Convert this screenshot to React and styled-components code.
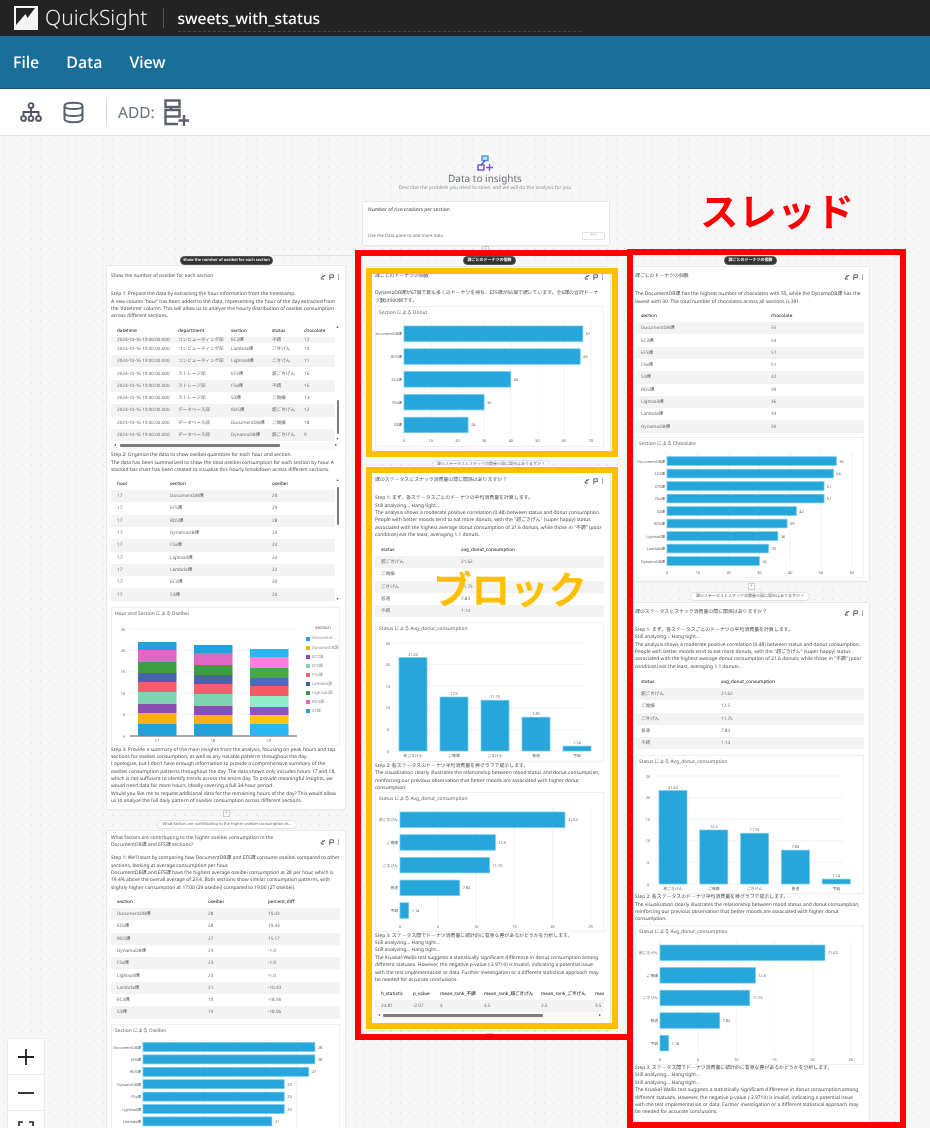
import React from 'react';
import styled, { createGlobalStyle } from 'styled-components';

const CANVAS_TOP = 136;
const FONT = `"Noto Sans", "Noto Sans CJK JP", sans-serif`;

const GlobalStyle = createGlobalStyle`
  html, body { margin: 0; padding: 0; background: #f7f7f7; }
  * { box-sizing: border-box; }
`;

const Page = styled.div`
  position: relative;
  width: 930px;
  height: 1128px;
  overflow: hidden;
  display: flex;
  flex-direction: column;
  font-family: ${FONT};
  text-rendering: geometricPrecision;
  background: #f7f7f7;
  filter: blur(0.45px);
`;

// top bars
const BrandBar = styled.header`
  flex: 0 0 36px;
  display: flex;
  align-items: center;
  background: #232323;
  padding-left: 14px;
`;
const BrandName = styled.span`
  margin-left: 7px;
  color: #f2f2f2;
  font-size: 21px;
  font-weight: 300;
  line-height: 30px;
`;
const BrandDivider = styled.span`
  width: 1px;
  height: 20px;
  margin: 0 14px 0 15px;
  background: #555;
`;
const FileName = styled.span`
  width: 403px;
  height: 26px;
  margin-top: 2px;
  color: #fff;
  font-size: 15.5px;
  font-weight: 500;
  line-height: 24px;
  border-bottom: 1px dashed #444;
`;
const MenuBar = styled.nav`
  flex: 0 0 53px;
  display: flex;
  align-items: center;
  gap: 27px;
  padding-left: 13px;
  background: #1a6f99;
  border-bottom: 1px solid #15587a;
`;
const MenuItem = styled.span`
  color: #fff;
  font-size: 16px;
  font-weight: 500;
`;
const Toolbar = styled.div`
  flex: 0 0 47px;
  display: flex;
  align-items: center;
  padding-left: 20px;
  background: #fff;
  border-bottom: 1px solid #e2e2e2;
`;
const ToolDivider = styled.span`
  width: 1px;
  height: 26px;
  margin: 0 11px 0 22px;
  background: #d5d5d5;
`;
const AddLabel = styled.span`
  color: #687078;
  font-size: 15.5px;
  margin-right: 9px;
`;
const HierarchyIcon = styled.svg`
  margin-right: 21px;
`;

// free canvas with the nodes of the flow
const Canvas = styled.main`
  position: relative;
  flex: 1;
  background-color: #f7f7f7;
  background-image: radial-gradient(#d8d8d8 0.7px, transparent 0.9px);
  background-size: 9px 9px;
`;
const Intro = styled.div`
  position: absolute;
  left: 340px;
  top: 19px;
  width: 290px;
  display: flex;
  flex-direction: column;
  align-items: center;
`;
const IntroTitle = styled.div`
  color: #6b7178;
  font-size: 10px;
  line-height: 14px;
`;
const IntroSub = styled.div`
  color: #8a8f96;
  font-size: 4.9px;
  line-height: 7px;
  white-space: nowrap;
`;
const Prompt = styled.div`
  position: absolute;
  left: 363px;
  top: 66px;
  width: 246px;
  height: 43px;
  padding: 5px;
  display: flex;
  flex-direction: column;
  justify-content: space-between;
  background: #fff;
  box-shadow: 0 0 0 1px #e6e6e6, 0 1px 2px rgba(0, 0, 0, 0.08);
  border-radius: 1px;
`;
const PromptText = styled.div`
  color: #333;
  font-size: 4.9px;
  line-height: 7px;
`;
const PromptFoot = styled.div`
  display: flex;
  justify-content: space-between;
  align-items: center;
  color: #777;
  font-size: 4.4px;
`;
const PromptButton = styled.span`
  width: 23px;
  height: 8px;
  margin-right: -1px;
  border: 1px solid #e4e4e4;
  border-radius: 1px;
  color: #bbb;
  font-size: 3.5px;
  line-height: 6px;
  text-align: center;
`;
const Pill = styled.div`
  position: absolute;
  left: ${(p) => p.$x}px;
  top: ${(p) => p.$y - CANVAS_TOP}px;
  width: ${(p) => p.$w}px;
  height: 9px;
  border-radius: 5px;
  background: ${(p) => (p.$light ? '#fff' : '#333')};
  color: ${(p) => (p.$light ? '#666' : '#fff')};
  border: 1px solid ${(p) => (p.$light ? '#e2e2e2' : '#555')};
  font-size: 4px;
  font-weight: ${(p) => (p.$light ? 400 : 600)};
  line-height: 7px;
  text-align: center;
  white-space: nowrap;
  overflow: hidden;
`;
const Joint = styled.div`
  position: absolute;
  left: ${(p) => p.$x}px;
  top: ${(p) => p.$y - CANVAS_TOP}px;
  width: 7px;
  height: 7px;
  background: #fff;
  border: 1px solid #ccc;
  color: #999;
  font-size: 5px;
  line-height: 5px;
  text-align: center;
`;
const Edge = styled.div`
  position: absolute;
  left: ${(p) => p.$x}px;
  top: ${(p) => p.$y - CANVAS_TOP}px;
  width: ${(p) => p.$w}px;
  height: 1px;
  background: #e2e2e2;
`;
const Card = styled.section`
  position: absolute;
  left: ${(p) => p.$x}px;
  top: ${(p) => p.$y - CANVAS_TOP}px;
  width: ${(p) => p.$w}px;
  padding: 0 ${(p) => p.$r}px ${(p) => p.$b}px ${(p) => p.$l}px;
  background: #fff;
  box-shadow: 0 0 0 1px #e9e9e9, 0 1px 2px rgba(0, 0, 0, 0.1);
  border-radius: 1px;
`;
const TitleRow = styled.div`
  height: ${(p) => p.$h}px;
  display: flex;
  align-items: center;
  justify-content: space-between;
`;
const CardTitle = styled.div`
  color: #4b5159;
  font-size: 4.9px;
  line-height: 7.2px;
  white-space: nowrap;
`;
const CardIcons = styled.div`
  display: flex;
  align-items: center;
  gap: 3px;
  flex: none;
`;
const Para = styled.div`
  margin-top: ${(p) => p.$mt}px;
  color: #454a52;
  font-size: 4.9px;
  line-height: 7.4px;
`;
const Line = styled.div`
  height: 7.4px;
  white-space: nowrap;
`;
const TableWrap = styled.div`
  position: relative;
  margin-top: ${(p) => p.$mt}px;
  height: ${(p) => p.$h}px;
  overflow: hidden;
  background: #fff;
`;
const Row = styled.div`
  display: grid;
  grid-template-columns: ${(p) => p.$cols};
  align-items: ${(p) => (p.$cut ? 'end' : 'center')};
  height: ${(p) => p.$h || 12.3}px;
  padding-left: 6px;
  overflow: hidden;
  background: ${(p) => (p.$shade ? '#f3f3f3' : '#fff')};
  color: ${(p) => (p.$head ? '#30343a' : '#666b72')};
  font-size: 4.6px;
  font-weight: ${(p) => (p.$head ? 500 : 400)};
  white-space: nowrap;
`;
const ScrollV = styled.div`
  position: absolute;
  right: 0;
  top: 0;
  bottom: ${(p) => p.$bottom}px;
  width: 5px;
  background: #fff;
  color: #555;
  font-size: 4px;
  line-height: 5px;
  text-align: center;
  display: flex;
  flex-direction: column;
  justify-content: space-between;
`;
const Thumb = styled.div`
  position: absolute;
  left: 1.5px;
  top: ${(p) => p.$top}px;
  width: 2.5px;
  height: ${(p) => p.$h}px;
  background: #7d7d7d;
  border-radius: 1px;
`;
const ScrollH = styled.div`
  position: absolute;
  left: 0;
  right: 0;
  bottom: 0;
  height: 7px;
  padding: 0 3px;
  background: #fafafa;
  color: #555;
  font-size: 4px;
  line-height: 7px;
  display: flex;
  justify-content: space-between;
`;
const ThumbH = styled.div`
  position: absolute;
  left: ${(p) => p.$left}px;
  top: 2px;
  width: ${(p) => p.$w}px;
  height: 2.8px;
  background: #7d7d7d;
  border-radius: 1px;
`;
const ChartBox = styled.div`
  margin-top: ${(p) => p.$mt}px;
  height: ${(p) => p.$h}px;
  width: 229px;
  background: #fff;
  box-shadow: inset 0 0 0 1px #f0f0f0;
  overflow: hidden;
`;
const ChartTitle = styled.div`
  height: 15px;
  padding-left: 4px;
  color: #5f646b;
  font-size: 4.9px;
  line-height: 15px;
`;
const ChartBody = styled.div`
  display: flex;
`;
const ChartSvg = styled.svg`
  display: block;
  flex: none;
  text {
    font-family: ${FONT};
    font-size: 3.8px;
    fill: #666;
  }
`;
const Legend = styled.div`
  flex: 1;
  padding-top: 3px;
  display: flex;
  flex-direction: column;
`;
const LegendTitle = styled.div`
  height: 6px;
  margin-bottom: 3px;
  color: #555;
  font-size: 4.6px;
  line-height: 6px;
  text-align: center;
`;
const LegendItem = styled.div`
  display: flex;
  align-items: center;
  gap: 2px;
  height: 9px;
  color: #8a8f96;
  font-size: 4.2px;
  white-space: nowrap;
`;
const Swatch = styled.span`
  width: 4px;
  height: 4px;
  background: ${(p) => p.$color};
  flex: none;
`;

// annotations drawn over the screenshot
const Frame = styled.div`
  position: absolute;
  left: ${(p) => p.$x}px;
  top: ${(p) => p.$y}px;
  width: ${(p) => p.$w}px;
  height: ${(p) => p.$h}px;
  border: 6px solid ${(p) => p.$color};
  pointer-events: none;
`;
const Callout = styled.div`
  position: absolute;
  left: ${(p) => p.$x}px;
  top: ${(p) => p.$y}px;
  color: ${(p) => p.$color};
  font-family: "Noto Sans CJK JP", sans-serif;
  font-size: 38.5px;
  font-weight: 700;
  line-height: 48px;
  white-space: nowrap;
`;
const Zoom = styled.div`
  position: absolute;
  left: 8px;
  top: 1039px;
  width: 36px;
  background: #fff;
  box-shadow: 0 0 0 1px #ececec;
  display: flex;
  flex-direction: column;
`;
const ZoomButton = styled.div`
  height: 36px;
  display: flex;
  align-items: center;
  justify-content: center;
  border-bottom: 1px solid #ececec;
  color: #222;
`;

const BAR = '#27a6dc';
const BAR_EDGE = '#74cbee';

function HBarChart({ rows, x0, unit, top, step, barH, axisY, ticks }) {
  return (
    <ChartSvg width="229" height="126">
      {ticks.map((t) => (
        <g key={t}>
          <line x1={x0 + t * unit} x2={x0 + t * unit} y1="0" y2={axisY - 5} stroke="#eee" strokeWidth="0.7" />
          <text x={x0 + t * unit} y={axisY + 1.5} textAnchor="middle">{t}</text>
        </g>
      ))}
      {rows.map(([label, value], i) => (
        <g key={label}>
          <rect x={x0} y={top + i * step} width={value * unit} height={barH} fill={BAR} stroke={BAR_EDGE} strokeWidth="0.7" />
          <text x={x0 - 2} y={top + i * step + barH / 2 + 1.5} textAnchor="end">{label}</text>
          <text x={x0 + value * unit + 3} y={top + i * step + barH / 2 + 1.5}>{value}</text>
        </g>
      ))}
    </ChartSvg>
  );
}

function VBarChart({ rows, step }) {
  const base = 114;
  const unit = 4.32;
  return (
    <ChartSvg width="229" height="125">
      {[0, 5, 10, 15, 20, 25].map((t) => (
        <g key={t}>
          <line x1="20" x2="208" y1={base - t * unit} y2={base - t * unit} stroke="#eee" strokeWidth="0.7" />
          <text x="13" y={base - t * unit + 1.5} textAnchor="middle">{t}</text>
        </g>
      ))}
      {rows.map(([label, value], i) => (
        <g key={label}>
          <rect x={24 + i * step} y={base - value * unit} width="28" height={value * unit} fill={BAR} stroke={BAR_EDGE} strokeWidth="0.7" />
          <text x={38 + i * step} y={base - value * unit - 2} textAnchor="middle">{value}</text>
          <text x={38 + i * step} y={base + 5.5} textAnchor="middle">{label}</text>
        </g>
      ))}
    </ChartSvg>
  );
}

const STACK_COLORS = ['#22a0d9', '#de68c4', '#409c42', '#4565ab', '#f55f6c', '#7fd2b2', '#8a4db2', '#fdb015', '#22a0d9'];
const BRIGHT = ['#2ab6f0', '#ff80da', '#46a848', '#4a6bb8', '#f65a62', '#90ecc9', '#9650c4', '#ffc512', '#2ab6f0'];
const STACKS = [
  { x: 27, label: '17', edges: [20, 28, 40, 51, 60, 70, 82, 91, 102, 114] },
  { x: 83, label: '18', edges: [23, 31, 43, 53, 62, 72, 84, 93, 102, 114] },
  { x: 139, label: '19', edges: [27, 35, 46, 56, 64, 74, 85, 93, 102, 114], bright: true },
];
const LEGEND = ['Document...', 'DynamoDB課', 'EC2課', 'EFS課', 'FSx課', 'Lambda課', 'Lightsail課', 'RDS課', 'S3課'];
const LEGEND_COLORS = ['#22a0d9', '#fdb015', '#8a4db2', '#7fd2b2', '#f55f6c', '#4565ab', '#409c42', '#de68c4', '#22a0d9'];

function StackedChart() {
  return (
    <ChartBody>
      <ChartSvg width="195" height="124">
        {[0, 5, 10, 15, 20, 25].map((t, i) => (
          <g key={t}>
            <line x1="19" x2="186" y1={114 - i * 21.4} y2={114 - i * 21.4} stroke={i ? '#eee' : '#555'} strokeWidth={i ? 0.7 : 1} />
            <text x="14" y={115.5 - i * 21.4} textAnchor="end">{t}</text>
          </g>
        ))}
        {STACKS.map((s) => (
          <g key={s.label}>
            {s.edges.slice(0, -1).map((e, i) => (
              <rect key={e} x={s.x} y={e} width="38.5" height={s.edges[i + 1] - e} fill={(s.bright ? BRIGHT : STACK_COLORS)[i]} />
            ))}
            <text x={s.x + 19} y="120" textAnchor="middle">{s.label}</text>
          </g>
        ))}
      </ChartSvg>
      <Legend>
        <LegendTitle>section</LegendTitle>
        {LEGEND.map((name, i) => (
          <LegendItem key={name}>
            <Swatch $color={LEGEND_COLORS[i]} />
            {name}
          </LegendItem>
        ))}
      </Legend>
    </ChartBody>
  );
}

function CardActions() {
  return (
    <CardIcons>
      <svg width="6" height="6" viewBox="0 0 6 6">
        <path d="M1 5 L3.2 1.2 M3.2 3 L5 1 M1 5 H4" stroke="#444" strokeWidth="0.9" fill="none" />
      </svg>
      <svg width="5" height="6" viewBox="0 0 5 6">
        <path d="M.8 6 V.8 H4.4 V3.6 H.8" stroke="#444" strokeWidth="0.8" fill="none" />
      </svg>
      <svg width="3" height="6" viewBox="0 0 3 6">
        <circle cx="1.5" cy="1" r=".6" fill="#444" />
        <circle cx="1.5" cy="3" r=".6" fill="#444" />
        <circle cx="1.5" cy="5" r=".6" fill="#444" />
      </svg>
    </CardIcons>
  );
}

function Lines({ mt, lines }) {
  return (
    <Para $mt={mt}>
      {lines.map((l, i) => (
        <Line key={i}>{l}</Line>
      ))}
    </Para>
  );
}

function DataRows({ cols, rows, startShade = true }) {
  return rows.map((r, i) => (
    <Row key={r.join()} $cols={cols} $shade={(i % 2 === 0) === startShade}>
      {r.map((c, j) => (
        <span key={j}>{c}</span>
      ))}
    </Row>
  ));
}

function HeadRow({ cols, names }) {
  return (
    <Row $cols={cols} $head $h={12}>
      {names.map((n) => (
        <span key={n}>{n}</span>
      ))}
    </Row>
  );
}

const TS = '2024-10-16 19:00:00.000';
const COLS_RAW = '61px 53px 41px 32px 1fr';
const RAW_ROWS = [
  [TS, 'コンピューティング部', 'Lambda課', 'ごきげん', '10'],
  [TS, 'コンピューティング部', 'Lightsail課', 'ごきげん', '11'],
  [TS, 'ストレージ部', 'EFS課', '超ごきげん', '16'],
  [TS, 'ストレージ部', 'FSx課', '不調', '16'],
  [TS, 'ストレージ部', 'S3課', 'ご機嫌', '13'],
  [TS, 'データベース部', 'RDS課', '超ごきげん', '12'],
  [TS, 'データベース部', 'DocumentDB課', 'ご機嫌', '18'],
  [TS, 'データベース部', 'DynamoDB課', '超ごきげん', '9'],
];
const HOUR_ROWS = [
  ['17', 'DocumentDB課', '29'],
  ['17', 'EFS課', '29'],
  ['17', 'RDS課', '28'],
  ['17', 'DynamoDB課', '24'],
  ['17', 'FSx課', '24'],
  ['17', 'Lightsail課', '24'],
  ['17', 'Lambda課', '22'],
  ['17', 'EC2課', '20'],
  ['17', 'S3課', '20'],
];
const DIFF_ROWS = [
  ['DocumentDB課', '28', '19.43'],
  ['EFS課', '28', '19.43'],
  ['RDS課', '27', '15.17'],
  ['DynamoDB課', '23', '-1.9'],
  ['FSx課', '23', '-1.9'],
  ['Lightsail課', '23', '-1.9'],
  ['Lambda課', '21', '-10.43'],
  ['EC2課', '19', '-18.96'],
  ['S3課', '19', '-18.96'],
];
const CHOC_ROWS = [
  ['DocumentDB課', '55'],
  ['EC2課', '54'],
  ['EFS課', '51'],
  ['FSx課', '51'],
  ['S3課', '42'],
  ['RDS課', '39'],
  ['Lightsail課', '36'],
  ['Lambda課', '33'],
  ['DynamoDB課', '30'],
];
const STATUS_ROWS = [
  ['超ごきげん', '21.62'],
  ['ご機嫌', '12.5'],
  ['ごきげん', '11.75'],
  ['普通', '7.83'],
  ['不調', '1.14'],
];
const STATUS_VALUES = STATUS_ROWS.map(([n, v]) => [n, Number(v)]);
const CHOC_BARS = CHOC_ROWS.map(([n, v]) => [n, Number(v)]);
const OSEIBEI_BARS = DIFF_ROWS.map(([n, v]) => [n, Number(v)]);
const DONUT_BARS = [
  ['DocumentDB課', 67],
  ['RDS課', 66],
  ['EC2課', 40],
  ['FSx課', 30],
  ['S3課', 24],
];

const STEP1_LINES = [
  'Step 1: まず、各ステータスごとのドーナツの平均消費量を計算します。',
  'Still analyzing... Hang tight...',
  'The analysis shows a moderate positive correlation (0.48) between status and donut consumption.',
  'People with better moods tend to eat more donuts, with the "超ごきげん" (super happy) status',
  'associated with the highest average donut consumption of 21.6 donuts, while those in "不調" (poor',
  'condition) eat the least, averaging 1.1 donuts.',
];
const STEP2_LINES = [
  'Step 2: 各ステータスのドーナツ平均消費量を棒グラフで提示します。',
  'The visualization clearly illustrates the relationship between mood status and donut consumption,',
  'reinforcing our previous observation that better moods are associated with higher donut',
  'consumption.',
];
const STEP3_LINES = [
  'Step 3: ステータス間でドーナツ消費量に統計的に有意な差があるかどうかを分析します。',
  'Still analyzing... Hang tight...',
  'Still analyzing... Hang tight...',
  'The Kruskal-Wallis test suggests a statistically significant difference in donut consumption among',
  'different statuses. However, the negative p-value (-2.9710) is invalid, indicating a potential issue',
  'with the test implementation or data. Further investigation or a different statistical approach may',
  'be needed for accurate conclusions.',
];

const STATUS_QUESTION = '課のステータスとスナック消費量の間に関係はありますか？';

function LeftColumn() {
  return (
    <>
      <Edge $x={272} $y={255} $w={90} />
      <Pill $x={180} $y={256} $w={93}>Show the number of oseibei for each section</Pill>
      <Card $x={107} $y={266} $w={238} $l={4} $r={5} $b={3}>
        <TitleRow $h={22}>
          <CardTitle>Show the number of oseibei for each section</CardTitle>
          <CardActions />
        </TitleRow>
        <Lines
          mt={3.3}
          lines={[
            'Step 1: Prepare the data by extracting the hour information from the timestamp.',
            "A new column 'hour' has been added to the data, representing the hour of the day extracted from",
            "the 'datetime' column. This will allow us to analyze the hourly distribution of oseibei consumption",
            'across different sections.',
          ]}
        />
        <TableWrap $mt={4} $h={124}>
          <HeadRow cols={COLS_RAW} names={['datetime', 'department', 'section', 'status', 'chocolate']} />
          <Row $cols={COLS_RAW} $h={6} $cut $shade>
            <span>{TS}</span>
            <span>コンピューティング部</span>
            <span>EC2課</span>
            <span>不調</span>
            <span>12</span>
          </Row>
          <DataRows cols={COLS_RAW} rows={RAW_ROWS} startShade={false} />
          <ScrollV $bottom={7}>
            <span>▴</span>
            <Thumb $top={75} $h={34} />
            <span>▾</span>
          </ScrollV>
          <ScrollH>
            <span>◂</span>
            <ThumbH $left={9} $w={160} />
            <span>▸</span>
          </ScrollH>
        </TableWrap>
        <Lines
          mt={3.5}
          lines={[
            'Step 2: Organize the data to show oseibei quantities for each hour and section.',
            'The data has been summarized to show the total oseibei consumption for each section by hour. A',
            'stacked bar chart has been created to visualize this hourly breakdown across different sections.',
          ]}
        />
        <TableWrap $mt={3.5} $h={124}>
          <HeadRow cols="53px 102px 1fr" names={['hour', 'section', 'oseibei']} />
          <DataRows cols="53px 102px 1fr" rows={HOUR_ROWS} />
          <ScrollV $bottom={0}>
            <span>▴</span>
            <Thumb $top={9} $h={38} />
            <span>▾</span>
          </ScrollV>
        </TableWrap>
        <ChartBox $mt={5} $h={139}>
          <ChartTitle>Hour and Section による Oseibei</ChartTitle>
          <StackedChart />
        </ChartBox>
        <Lines
          mt={0.5}
          lines={[
            'Step 3: Provide a summary of the main insights from the analysis, focusing on peak hours and top',
            'sections for oseibei consumption, as well as any notable patterns throughout the day.',
            "I apologize, but I don't have enough information to provide a comprehensive summary of the",
            'oseibei consumption patterns throughout the day. The data shown only includes hours 17 and 18,',
            'which is not sufficient to identify trends across the entire day. To provide meaningful insights, we',
            'would need data for more hours, ideally covering a full 24-hour period.',
            'Would you like me to request additional data for the remaining hours of the day? This would allow',
            'us to analyze the full daily pattern of oseibei consumption across different sections.',
          ]}
        />
      </Card>
      <Joint $x={223} $y={810}>+</Joint>
      <Pill $x={157} $y={820} $w={140} $light>What factors are contributing to the higher oseibei consumption in...</Pill>
      <Card $x={107} $y={831} $w={238} $l={4} $r={5} $b={4}>
        <TitleRow $h={22}>
          <CardTitle>
            What factors are contributing to the higher oseibei consumption in the
            <br />
            DocumentDB課 and EFS課 sections?
          </CardTitle>
          <CardActions />
        </TitleRow>
        <Lines
          mt={2.3}
          lines={[
            "Step 1: We'll start by comparing how DocumentDB課 and EFS課 consume oseibei compared to other",
            'sections, looking at average consumption per hour.',
            'DocumentDB課 and EFS課 have the highest average oseibei consumption at 28 per hour, which is',
            '19.4% above the overall average of 23.4. Both sections show similar consumption patterns, with',
            'slightly higher consumption at 17:00 (29 oseibei) compared to 19:00 (27 oseibei).',
          ]}
        />
        <TableWrap $mt={3.7} $h={122.7}>
          <HeadRow cols="91px 60px 1fr" names={['section', 'oseibei', 'percent_diff']} />
          <DataRows cols="91px 60px 1fr" rows={DIFF_ROWS} />
        </TableWrap>
        <ChartBox $mt={5} $h={141}>
          <ChartTitle>Section による Oseibei</ChartTitle>
          <HBarChart rows={OSEIBEI_BARS.map(([n, v]) => [n, v])} x0={32} unit={6.14} top={3.5} step={12.4} barH={9} axisY={120} ticks={[0, 5, 10, 15, 20, 25]} />
        </ChartBox>
      </Card>
    </>
  );
}

function MiddleColumn() {
  return (
    <>
      <Joint $x={482} $y={246}>+</Joint>
      <Pill $x={463} $y={256} $w={53}>課ごとのドーナツの個数</Pill>
      <Card $x={367} $y={267} $w={243} $l={8} $r={6} $b={4}>
        <TitleRow $h={20}>
          <CardTitle>課ごとのドーナツの個数</CardTitle>
          <CardActions />
        </TitleRow>
        <Lines
          mt={3.3}
          lines={[
            'DynamoDB課が67個で最も多くのドーナツを持ち、EFS課が66個で続いています。全6課の合計ドーナ',
            'ツ数は500個です。',
          ]}
        />
        <ChartBox $mt={1} $h={141}>
          <ChartTitle>Section による Donut</ChartTitle>
          <HBarChart rows={DONUT_BARS} x0={29} unit={2.67} top={5} step={22.8} barH={15.5} axisY={119} ticks={[0, 10, 20, 30, 40, 50, 60, 70]} />
        </ChartBox>
      </Card>
      <Pill $x={432} $y={460} $w={118} $light>{STATUS_QUESTION}</Pill>
      <Card $x={367} $y={473} $w={243} $l={8} $r={6} $b={11}>
        <TitleRow $h={16}>
          <CardTitle>{STATUS_QUESTION}</CardTitle>
          <CardActions />
        </TitleRow>
        <Lines mt={6.3} lines={STEP1_LINES} />
        <TableWrap $mt={4.3} $h={73.5}>
          <HeadRow cols="80px 1fr" names={['status', 'avg_donut_consumption']} />
          <DataRows cols="80px 1fr" rows={STATUS_ROWS} />
        </TableWrap>
        <ChartBox $mt={5} $h={140}>
          <ChartTitle>Status による Avg_donut_consumption</ChartTitle>
          <VBarChart rows={STATUS_VALUES} step={41} />
        </ChartBox>
        <Lines mt={0.3} lines={STEP2_LINES} />
        <ChartBox $mt={0} $h={140}>
          <ChartTitle>Status による Avg_donut_consumption</ChartTitle>
          <HBarChart rows={STATUS_VALUES} x0={25} unit={7.63} top={5} step={22.7} barH={15.5} axisY={119} ticks={[0, 5, 10, 15, 20, 25]} />
        </ChartBox>
        <Lines mt={0.3} lines={STEP3_LINES} />
        <TableWrap $mt={4} $h={31}>
          <HeadRow
            cols="32px 27px 44px 57px 54px 1fr"
            names={['h_statistic', 'p_value', 'mean_rank_不調', 'mean_rank_超ごきげん', 'mean_rank_ごきげん', 'mean_rank_ご機嫌']}
          />
          <Row $cols="32px 27px 44px 57px 54px 1fr" $shade $h={12}>
            <span>24.81</span>
            <span>-2.97</span>
            <span>4</span>
            <span>4.5</span>
            <span>2.5</span>
            <span>3.5</span>
          </Row>
          <ScrollH>
            <span>◂</span>
            <ThumbH $left={8} $w={160} />
            <span>▸</span>
          </ScrollH>
        </TableWrap>
      </Card>
      <Joint $x={486} $y={1033}>+</Joint>
    </>
  );
}

function RightColumn() {
  return (
    <>
      <Pill $x={724} $y={256} $w={53}>課ごとのドーナツの個数</Pill>
      <Card $x={632} $y={267} $w={237} $l={3} $r={5} $b={3}>
        <TitleRow $h={20}>
          <CardTitle>課ごとのドーナツの個数</CardTitle>
          <CardActions />
        </TitleRow>
        <Lines
          mt={4.3}
          lines={[
            'The DocumentDB課 has the highest number of chocolates with 55, while the DynamoDB課 has the',
            'lowest with 30. The total number of chocolates across all sections is 391.',
          ]}
        />
        <TableWrap $mt={4} $h={122.7}>
          <HeadRow cols="130px 1fr" names={['section', 'chocolate']} />
          <DataRows cols="130px 1fr" rows={CHOC_ROWS} />
        </TableWrap>
        <ChartBox $mt={4} $h={141}>
          <ChartTitle>Section による Chocolate</ChartTitle>
          <HBarChart rows={CHOC_BARS} x0={32} unit={3.08} top={4.7} step={12.5} barH={8.7} axisY={120} ticks={[0, 10, 20, 30, 40, 50, 60]} />
        </ChartBox>
      </Card>
      <Joint $x={748} $y={583}>+</Joint>
      <Pill $x={690} $y={592} $w={120} $light>{STATUS_QUESTION}</Pill>
      <Card $x={632} $y={603} $w={237} $l={3} $r={5} $b={14}>
        <TitleRow $h={20}>
          <CardTitle>{STATUS_QUESTION}</CardTitle>
          <CardActions />
        </TitleRow>
        <Lines mt={3.8} lines={STEP1_LINES} />
        <TableWrap $mt={4.8} $h={73.5}>
          <HeadRow cols="80px 1fr" names={['status', 'avg_donut_consumption']} />
          <DataRows cols="80px 1fr" rows={STATUS_ROWS} />
        </TableWrap>
        <ChartBox $mt={5.5} $h={139}>
          <ChartTitle>Status による Avg_donut_consumption</ChartTitle>
          <VBarChart rows={STATUS_VALUES} step={40.8} />
        </ChartBox>
        <Lines mt={0.3} lines={STEP2_LINES} />
        <ChartBox $mt={1} $h={140}>
          <ChartTitle>Status による Avg_donut_consumption</ChartTitle>
          <HBarChart rows={STATUS_VALUES} x0={25} unit={7.63} top={5} step={22.6} barH={15.5} axisY={119} ticks={[0, 5, 10, 15, 20, 25]} />
        </ChartBox>
        <Lines mt={0.3} lines={STEP3_LINES} />
      </Card>
    </>
  );
}

export default function App() {
  return (
    <>
      <GlobalStyle />
      <Page>
        <BrandBar>
          <svg width="24" height="24" viewBox="0 0 24 24">
            <rect width="24" height="24" fill="#f4f4f4" />
            <path d="M2 2 H21 L13.5 12 L11.5 8 L2 19 Z" fill="#232323" />
          </svg>
          <BrandName>QuickSight</BrandName>
          <BrandDivider />
          <FileName>sweets_with_status</FileName>
        </BrandBar>
        <MenuBar>
          <MenuItem>File</MenuItem>
          <MenuItem>Data</MenuItem>
          <MenuItem>View</MenuItem>
        </MenuBar>
        <Toolbar>
          <HierarchyIcon width="22" height="20" viewBox="0 0 22 20" fill="none" stroke="#4f5660" strokeWidth="1.9">
            <circle cx="11" cy="3.5" r="2.4" />
            <circle cx="3.5" cy="16.5" r="2.4" />
            <circle cx="11" cy="16.5" r="2.4" />
            <circle cx="18.5" cy="16.5" r="2.4" />
            <path d="M11 6 V14 M3.5 14 V10 H18.5 V14" />
          </HierarchyIcon>
          <svg width="21" height="23" viewBox="0 0 21 23" fill="none" stroke="#5a616b" strokeWidth="2">
            <path d="M1.5 5 C1.5 0.8 19.5 0.8 19.5 5 V18 C19.5 22.2 1.5 22.2 1.5 18 Z" />
            <path d="M1.5 5 C1.5 9 19.5 9 19.5 5 M1.5 12 C1.5 16 19.5 16 19.5 12" />
          </svg>
          <ToolDivider />
          <AddLabel>ADD:</AddLabel>
          <svg width="25" height="27" viewBox="0 0 25 27" fill="none" stroke="#5a616b" strokeWidth="2.4">
            <rect x="1.5" y="1.5" width="14" height="6.5" />
            <rect x="1.5" y="11" width="14" height="6.5" />
            <path d="M7 8 V11 M1.5 17.5 V25 H14 M14.5 21.5 H25 M20 16 V27" />
          </svg>
        </Toolbar>
        <Canvas>
          <Intro>
            <svg width="16" height="16" viewBox="0 0 16 16" fill="none" strokeWidth="1.3">
              <rect x="5" y="1" width="6" height="4.5" stroke="#3a8fd8" fill="#bfe3f7" />
              <path d="M8 5.5 L4 10" stroke="#4a5fc8" />
              <rect x="1" y="10" width="6" height="5" stroke="#6a3fc4" />
              <path d="M9 12.5 H16 M12.5 9 V16" stroke="#6a50e0" />
            </svg>
            <IntroTitle>Data to insights</IntroTitle>
            <IntroSub>Describe the problem you need to solve, and we will do the analysis for you</IntroSub>
          </Intro>
          <Prompt>
            <PromptText>Number of rice crackers per section</PromptText>
            <PromptFoot>
              <span>Use the Data pane to add more data</span>
              <PromptButton>実行</PromptButton>
            </PromptFoot>
          </Prompt>
          <LeftColumn />
          <MiddleColumn />
          <RightColumn />
        </Canvas>
        <Zoom>
          <ZoomButton>
            <svg width="18" height="18" viewBox="0 0 18 18" stroke="#222" strokeWidth="1.8">
              <path d="M1 9 H17 M9 1 V17" />
            </svg>
          </ZoomButton>
          <ZoomButton>
            <svg width="18" height="4" viewBox="0 0 18 4" stroke="#222" strokeWidth="1.8">
              <path d="M1 2 H17" />
            </svg>
          </ZoomButton>
          <ZoomButton>
            <svg width="16" height="16" viewBox="0 0 16 16" fill="none" stroke="#222" strokeWidth="1.6">
              <path d="M1 5 V1 H5 M11 1 H15 V5 M15 11 V15 H11 M5 15 H1 V11" />
            </svg>
          </ZoomButton>
        </Zoom>
        <Frame $x={355} $y={250} $w={278} $h={790} $color="#ff0000" />
        <Frame $x={627} $y={249} $w={279} $h={879} $color="#ff0000" />
        <Frame $x={366} $y={268} $w={252} $h={189} $color="#ffc000" />
        <Frame $x={366} $y={467} $w={252} $h={562} $color="#ffc000" />
        <Callout $x={700} $y={186} $color="#ff0000">スレッド</Callout>
        <Callout $x={433} $y={564} $color="#ffc000">ブロック</Callout>
      </Page>
    </>
  );
}
